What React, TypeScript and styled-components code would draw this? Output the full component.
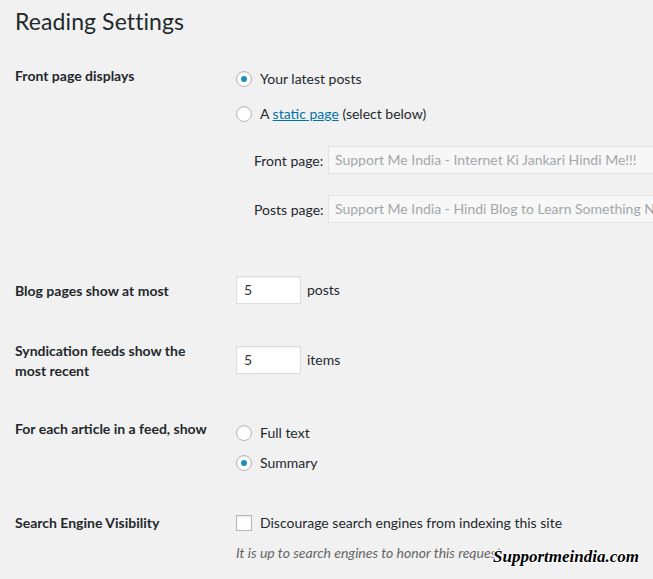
import React from "react";
import styled, { createGlobalStyle } from "styled-components";

const GlobalStyle = createGlobalStyle`
  html, body {
    margin: 0;
    padding: 0;
    background: #f1f1f1;
    overflow: hidden;
  }
  body {
    font-family: Lato, "Open Sans", "Liberation Sans", sans-serif;
    font-size: 14px;
    color: #23282d;
  }
`;

const Page = styled.div`
  position: relative;
  width: 653px;
  height: 579px;
  overflow: hidden;
  padding: 0 0 0 15px;
  box-sizing: border-box;
`;

const Title = styled.h1`
  margin: 7px 0 0;
  font-size: 23px;
  font-weight: 400;
  line-height: 29px;
  letter-spacing: 0.1px;
  color: #23282d;
`;

const Row = styled.div<{ $mt: number }>`
  display: grid;
  grid-template-columns: 221px 1fr;
  margin-top: ${(p) => p.$mt}px;
`;

const Label = styled.div<{ $pt: number }>`
  padding-top: ${(p) => p.$pt}px;
  font-weight: 700;
  line-height: 20px;
  width: 210px;
`;

const Content = styled.div<{ $pt: number }>`
  padding-top: ${(p) => p.$pt}px;
  display: flex;
  flex-direction: column;
`;

const Choices = styled.div<{ $gap: number }>`
  display: flex;
  flex-direction: column;
  gap: ${(p) => p.$gap}px;
`;

const Option = styled.label`
  display: flex;
  align-items: center;
  gap: 8px;
  height: 20px;
  line-height: 20px;
`;

const Radio = styled.span<{ $checked?: boolean }>`
  width: 14px;
  height: 14px;
  border: 1px solid #b4b9be;
  border-radius: 50%;
  background: #fff;
  box-shadow: inset 0 1px 2px rgba(0, 0, 0, 0.1);
  display: flex;
  align-items: center;
  justify-content: center;
  flex: none;
  &::after {
    content: "";
    display: ${(p) => (p.$checked ? "block" : "none")};
    width: 6px;
    height: 6px;
    border-radius: 50%;
    background: #1e8cbe;
  }
`;

const Checkbox = styled.span`
  width: 14px;
  height: 14px;
  border: 1px solid #b4b9be;
  background: #fff;
  box-shadow: inset 0 1px 2px rgba(0, 0, 0, 0.1);
  flex: none;
`;

const Link = styled.a`
  color: #0073aa;
  text-decoration: underline;
`;

const SubFields = styled.div`
  display: flex;
  flex-direction: column;
  gap: 21px;
  margin-top: 22px;
  padding-left: 18px;
`;

const SubField = styled.div`
  display: flex;
  align-items: center;
`;

const SubLabel = styled.span`
  width: 74px;
  flex: none;
`;

const SelectBox = styled.div`
  width: 420px;
  height: 28px;
  box-sizing: border-box;
  border: 1px solid #e2e2e2;
  background: #f7f7f7;
  color: #a3a7aa;
  padding: 0 6px;
  line-height: 26px;
  white-space: nowrap;
  overflow: hidden;
  flex: none;
`;

const InlineField = styled.div`
  display: flex;
  align-items: center;
  gap: 6px;
`;

const NumberBox = styled.div`
  width: 65px;
  height: 28px;
  box-sizing: border-box;
  border: 1px solid #ddd;
  background: #fff;
  box-shadow: inset 0 1px 2px rgba(0, 0, 0, 0.07);
  padding: 0 7px;
  line-height: 26px;
  color: #32373c;
`;

const Unit = styled.span`
  margin-top: -2px;
`;

const Description = styled.p`
  margin: 10px 0 0;
  font-style: italic;
  color: #666;
  line-height: 20px;
  white-space: nowrap;
`;

const Watermark = styled.div`
  position: absolute;
  left: 493px;
  top: 547px;
  font-family: "Liberation Serif", serif;
  font-style: italic;
  font-weight: 700;
  font-size: 17px;
  color: #000;
  text-shadow: 1px 1px 0 #fff, -1px -1px 0 #fff, 1px -1px 0 #fff,
    -1px 1px 0 #fff, 0 1px 0 #fff, 0 -1px 0 #fff, 1px 0 0 #fff, -1px 0 0 #fff;
`;

export default function App() {
  return (
    <>
      <GlobalStyle />
      <Page>
        <Title>Reading Settings</Title>

        <Row $mt={20}>
          <Label $pt={10}>Front page displays</Label>
          <Content $pt={13}>
            <Choices $gap={15}>
              <Option>
                <Radio $checked />
                <span>Your latest posts</span>
              </Option>
              <Option>
                <Radio />
                <span>
                  A <Link>static page</Link> (select below)
                </span>
              </Option>
            </Choices>
            <SubFields>
              <SubField>
                <SubLabel>Front page:</SubLabel>
                <SelectBox>Support Me India - Internet Ki Jankari Hindi Me!!!</SelectBox>
              </SubField>
              <SubField>
                <SubLabel>Posts page:</SubLabel>
                <SelectBox>
                  Support Me India - Hindi Blog to Learn Something New
                </SelectBox>
              </SubField>
            </SubFields>
          </Content>
        </Row>

        <Row $mt={43}>
          <Label $pt={15}>Blog pages show at most</Label>
          <Content $pt={10}>
            <InlineField>
              <NumberBox>5</NumberBox>
              <Unit>posts</Unit>
            </InlineField>
          </Content>
        </Row>

        <Row $mt={32}>
          <Label $pt={5}>
            Syndication feeds show the
            <br />
            most recent
          </Label>
          <Content $pt={10}>
            <InlineField>
              <NumberBox>5</NumberBox>
              <Unit>items</Unit>
            </InlineField>
          </Content>
        </Row>

        <Row $mt={28}>
          <Label $pt={10}>For each article in a feed, show</Label>
          <Content $pt={14}>
            <Choices $gap={10}>
              <Option>
                <Radio />
                <span>Full text</span>
              </Option>
              <Option>
                <Radio $checked />
                <span>Summary</span>
              </Option>
            </Choices>
          </Content>
        </Row>

        <Row $mt={30}>
          <Label $pt={10}>Search Engine Visibility</Label>
          <Content $pt={10}>
            <Option>
              <Checkbox />
              <span>Discourage search engines from indexing this site</span>
            </Option>
            <Description>
              It is up to search engines to honor this request.
            </Description>
          </Content>
        </Row>

        <Watermark>Supportmeindia.com</Watermark>
      </Page>
    </>
  );
}
